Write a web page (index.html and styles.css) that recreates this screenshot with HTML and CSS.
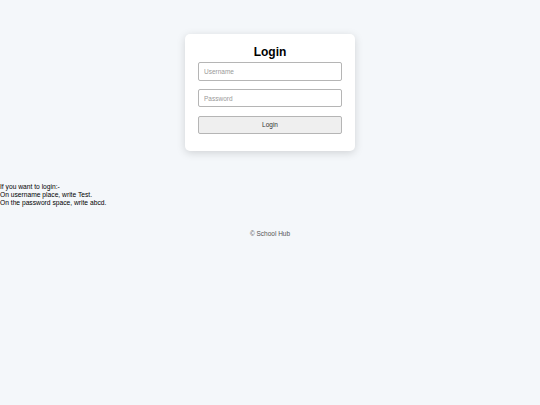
FILE: index.html
```html
<!DOCTYPE html>
<html>
<head>
<meta charset="utf-8">
<link rel="stylesheet" href="styles.css">
</head>
<body>
<div class="card">
  <h2 class="title">Login</h2>
  <input class="field" type="text" placeholder="Username">
  <input class="field" type="password" placeholder="Password">
  <button class="btn">Login</button>
</div>
<div class="note">If you want to login:-<br>On username place, write Test.<br>On the password space, write abcd.</div>
<div class="footer">© School Hub</div>
</body>
</html>
```
FILE: styles.css
```css
html, body {
  margin: 0;
  padding: 0;
  background: #f4f7fa;
  font-family: "Liberation Sans", Arial, sans-serif;
  color: #000;
}
.card {
  width: 170px;
  box-sizing: border-box;
  margin: 34px auto 0;
  padding: 10px 13px 17px;
  background: #fff;
  border-radius: 5px;
  box-shadow: 0 2px 8px rgba(0, 0, 0, 0.15);
  display: flex;
  flex-direction: column;
}
.title {
  margin: 0 0 2px;
  font-size: 12px;
  line-height: 16px;
  text-align: center;
  font-weight: bold;
}
.field {
  display: block;
  box-sizing: border-box;
  width: 100%;
  height: 18.5px;
  margin: 0 0 8.3px;
  padding: 0 5px;
  border: 1px solid #b5b5b5;
  border-radius: 2px;
  font-family: "Liberation Sans", Arial, sans-serif;
  font-size: 6.5px;
  background: #fff;
}
.field::placeholder {
  color: #999;
}
.btn {
  display: block;
  box-sizing: border-box;
  width: 100%;
  height: 18.5px;
  margin: 0;
  border: 1px solid #b5b5b5;
  border-radius: 2px;
  background: #efefef;
  font-family: "Liberation Sans", Arial, sans-serif;
  font-size: 6.5px;
  font-weight: normal;
  color: #333;
}
.note {
  margin-top: 32px;
  font-size: 6.7px;
  line-height: 8px;
}
.footer {
  margin-top: 23px;
  text-align: center;
  font-size: 6.5px;
  color: #555;
}
```
